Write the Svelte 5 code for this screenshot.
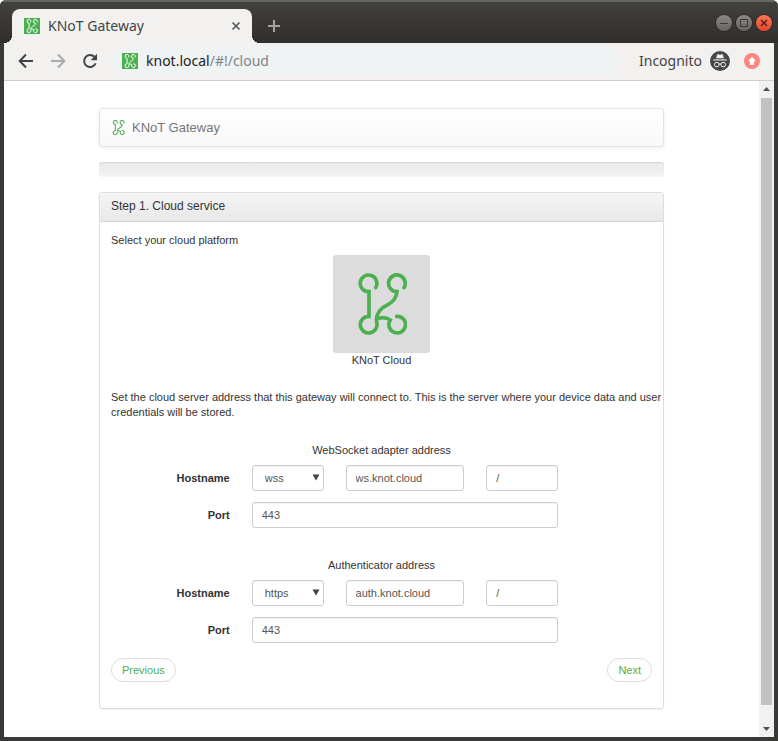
<script>
  const groups = $state([
    { id: 'ws', title: 'WebSocket adapter address', protocols: ['wss', 'ws'], protocol: 'wss', host: 'ws.knot.cloud', path: '/', port: '443' },
    { id: 'auth', title: 'Authenticator address', protocols: ['https', 'http'], protocol: 'https', host: 'auth.knot.cloud', path: '/', port: '443' }
  ]);
</script>

{#snippet knot(cls)}
  <svg class={cls} viewBox="14 17 150 186" aria-hidden="true">
    <path d="M70 61A25 25 0 1 0 50 73V147A25 25 0 1 0 73 165M155 61A25 25 0 1 0 134 73C132 91 124 103 108 111C88 120 73 134 72 158M77 154C90 149 102 150 114 158A25 25 0 1 0 133 147" />
  </svg>
{/snippet}

<div class="window">
  <header class="titlebar">
    <div class="tab">
      <span class="favicon">{@render knot('mark')}</span>
      <span class="tab-title">KNoT Gateway</span>
      <button class="plain close-tab" aria-label="Close tab">
        <svg width="10" height="10" viewBox="0 0 10 10"><path d="M1.5 1.5l7 7M8.5 1.5l-7 7" stroke="#555" stroke-width="1.6" /></svg>
      </button>
    </div>
    <button class="plain new-tab" aria-label="New tab">
      <svg width="12" height="12" viewBox="0 0 12 12"><path d="M6 0v12M0 6h12" stroke="#a4a3a0" stroke-width="2" /></svg>
    </button>
    <div class="controls">
      <button class="plain control" aria-label="Minimize">
        <svg width="16" height="16" viewBox="0 0 16 16"><path d="M4 8.5h8" stroke="#3a3935" /></svg>
      </button>
      <button class="plain control" aria-label="Maximize">
        <svg width="16" height="16" viewBox="0 0 16 16"><path d="M4.5 4.5h7v7h-7z" fill="none" stroke="#3a3935" /></svg>
      </button>
      <button class="plain control quit" aria-label="Close">
        <svg width="16" height="16" viewBox="0 0 16 16"><path d="M5 5l6 6M11 5l-6 6" stroke="#4b2318" stroke-width="1.4" /></svg>
      </button>
    </div>
  </header>

  <nav class="toolbar">
    <button class="plain" aria-label="Back">
      <svg width="16" height="16" viewBox="0 0 16 16"><path d="M15 8H2M8 1.5L1.7 8 8 14.5" fill="none" stroke="#444" stroke-width="2" /></svg>
    </button>
    <button class="plain" aria-label="Forward">
      <svg width="16" height="16" viewBox="0 0 16 16"><path d="M1 8h13M8 1.5L14.3 8 8 14.5" fill="none" stroke="#aaa" stroke-width="2" /></svg>
    </button>
    <button class="plain" aria-label="Reload">
      <svg width="16" height="16" viewBox="0 0 16 16"><path d="M13.6 10.4A6 6 0 1 1 12.4 3.8" fill="none" stroke="#444" stroke-width="2" /><path d="M15 .8v6.4H8.6z" fill="#444" /></svg>
    </button>
    <div class="address">
      <span class="favicon">{@render knot('mark')}</span>
      <span class="url"><b>knot.local</b>/#!/cloud</span>
    </div>
    <span class="incognito">Incognito</span>
    <svg class="spy" width="20" height="20" viewBox="0 0 20 20" aria-hidden="true">
      <circle cx="10" cy="10" r="10" fill="#474747" />
      <path d="M6.2 7.2L7.2 3.6Q7.500 3 8.200 3.200L10 3.700l1.800-.5q.7-.2 1 .4l1 3.600z" fill="#f2f1f0" />
      <path d="M3.300 8.900h13.400" stroke="#f2f1f0" stroke-width="1.100" />
      <circle cx="6.800" cy="13.600" r="2.300" fill="none" stroke="#f2f1f0" />
      <circle cx="13.200" cy="13.600" r="2.300" fill="none" stroke="#f2f1f0" />
      <path d="M9 13.300q1-.7 2 0" fill="none" stroke="#f2f1f0" />
    </svg>
    <button class="plain" aria-label="Update available">
      <svg width="16" height="16" viewBox="0 0 16 16"><circle cx="8" cy="8" r="8" fill="#ff8580" /><path d="M8 3.800l4.200 4.400H10V12H6V8.200H3.800z" fill="#fff" /></svg>
    </button>
  </nav>

  <div class="viewport">
    <main>
      <div class="navbar">{@render knot('brand-mark')}<a href="#!/">KNoT Gateway</a></div>
      <div class="progress"></div>

      <section class="panel">
        <h1>Step 1. Cloud service</h1>
        <div class="body">
          <p>Select your cloud platform</p>
          <figure>
            <div class="thumb">{@render knot('logo')}</div>
            <figcaption>KNoT Cloud</figcaption>
          </figure>
          <p class="help">Set the cloud server address that this gateway will connect to. This is the server where your device data and user credentials will be stored.</p>

          {#each groups as g (g.id)}
            <fieldset>
              <legend>{g.title}</legend>
              <div class="row">
                <label for="{g.id}-host">Hostname</label>
                <div class="select">
                  <select aria-label="{g.title} protocol" bind:value={g.protocol}>
                    {#each g.protocols as p}<option>{p}</option>{/each}
                  </select>
                  <svg width="8" height="7" viewBox="0 0 8 7" aria-hidden="true"><path d="M.5 .5h7L4 6.500z" fill="#444" /></svg>
                </div>
                <input id="{g.id}-host" bind:value={g.host} />
                <input aria-label="{g.title} path" bind:value={g.path} />
              </div>
              <div class="row">
                <label for="{g.id}-port">Port</label>
                <input class="port" id="{g.id}-port" bind:value={g.port} />
              </div>
            </fieldset>
          {/each}

          <div class="pager">
            <button>Previous</button>
            <button>Next</button>
          </div>
        </div>
      </section>
    </main>
    <div class="scrollbar" aria-hidden="true">
      <svg width="7" height="4" viewBox="0 0 7 4"><path d="M0 4L3.500 0 7 4z" fill="#505050" /></svg>
      <div class="scroll-thumb"></div>
      <svg width="7" height="4" viewBox="0 0 7 4"><path d="M0 0h7L3.500 4z" fill="#505050" /></svg>
    </div>
  </div>
</div>

<style>
  :global(body) { margin: 0; background: #fff; }
  * { box-sizing: border-box; }
  .window {
    min-height: 100vh;
    display: flex;
    flex-direction: column;
    padding: 0 4px 4px;
    background: #393a38;
    border-radius: 6px 6px 0 0;
    font: 14px/20px "Noto Sans", "Open Sans", sans-serif;
    color: #444;
    overflow: hidden;
  }
  .plain { border: 0; padding: 0; background: none; display: flex; }
  .titlebar {
    height: 43px;
    display: flex;
    align-items: flex-end;
    margin: 0 -4px;
    padding: 0 6px 0 12px;
    background: linear-gradient(#666 0, #666 2px, #42413e 2px, #302f2d);
  }
  .tab {
    position: relative;
    width: 240px;
    height: 34px;
    display: flex;
    align-items: center;
    padding: 0 11px 0 12px;
    gap: 8px;
    background: #f2f1f0;
    border-radius: 8px 8px 0 0;
  }
  .tab::before, .tab::after {
    content: "";
    position: absolute;
    bottom: 0;
    width: 8px;
    height: 8px;
  }
  .tab::before { right: 100%; background: radial-gradient(circle at 0 0, transparent 8px, #f2f1f0 8px); }
  .tab::after { left: 100%; background: radial-gradient(circle at 100% 0, transparent 8px, #f2f1f0 8px); }
  .favicon { display: flex; width: 16px; height: 16px; background: #4caf50; flex: none; }
  :global(.mark) { width: 16px; height: 14px; margin: 1px 0; fill: none; stroke: #fff; stroke-width: 13; }
  .tab-title { flex: 1; }
  .new-tab { margin: 0 auto 11px 16px; }
  .controls { display: flex; gap: 4px; margin-bottom: 12px; }
  .control { border-radius: 50%; background: linear-gradient(#8a8983, #65645f); box-shadow: 0 0 0 1px #2b2a28; }
  .quit { background: linear-gradient(#f9745a, #e9462a); }
  .toolbar {
    height: 38px;
    display: flex;
    align-items: center;
    gap: 16px;
    padding: 0 14px 1px;
    background: #f2f1f0;
    border-bottom: 1px solid #cecdcc;
  }
  .address {
    flex: 1;
    height: 28px;
    display: flex;
    align-items: center;
    gap: 8px;
    padding-left: 8px;
    border-radius: 14px;
    background: #eff3f4;
    color: #808488;
  }
  .url b { font-weight: 400; color: #222; }
  .incognito { margin-right: -8px; margin-left: 4px; }
  .spy { margin-right: -2px; }

  .viewport {
    flex: 1;
    display: flex;
    background: #fff;
    font: 11px/15px "Liberation Sans", Arial, sans-serif;
    color: #333;
  }
  main { flex: 1; min-width: 0; padding: 27px 95px 28px; }
  .navbar {
    height: 39px;
    display: flex;
    align-items: center;
    gap: 7px;
    padding: 0 12px;
    border: 1px solid #e4e4e4;
    border-radius: 3px;
    background: linear-gradient(#fff, #f8f8f8);
    box-shadow: 0 1px 4px rgba(0, 0, 0, .08);
  }
  .navbar a { font-size: 13px; color: #777; text-decoration: none; }
  :global(.brand-mark) { width: 13px; height: 15px; fill: none; stroke: #4caf50; stroke-width: 13; }
  .progress {
    height: 15px;
    margin: 15px 0;
    border-radius: 3px;
    background: linear-gradient(#e8e8e8, #f5f5f5);
    box-shadow: inset 0 1px 1px rgba(0, 0, 0, .08);
  }
  .panel { border: 1px solid #ddd; border-radius: 3px; box-shadow: 0 1px 2px rgba(0, 0, 0, .05); }
  h1 {
    margin: 0;
    padding: 6px 11px 7px;
    border-bottom: 1px solid #d4d4d4;
    background: linear-gradient(#f5f5f5, #e8e8e8);
    font-size: 12px;
    font-weight: 400;
    line-height: 15px;
  }
  .body { padding: 11px 11px 26px; }
  p { margin: 0; }
  figure { margin: 7px 0 22px; display: flex; flex-direction: column; align-items: center; }
  .thumb { width: 97px; height: 98px; display: grid; place-items: center; background: #dcdcdc; border-radius: 3px; }
  :global(.logo) { width: 50px; height: 62px; fill: none; stroke: #4caf50; stroke-width: 11; stroke-linecap: round; }
  .help { margin: 0 -11px 23px 0; }
  fieldset { margin: 0 -11px 30px; padding: 0; border: 0; min-width: 0; }
  fieldset:last-of-type { margin-bottom: 15px; }
  legend { width: 100%; padding: 0 0 7px; text-align: center; }
  .row {
    display: grid;
    grid-template-columns: 3fr 2fr 3fr 2fr 2fr;
    align-items: center;
  }
  .row + .row { margin-top: 11px; }
  .row > * { margin: 0 11px; min-width: 0; }
  label { font-weight: 700; text-align: right; }
  input, select {
    height: 26px;
    padding: 0 9px;
    border: 1px solid #ccc;
    border-radius: 3px;
    background: #fff;
    box-shadow: inset 0 1px 1px rgba(0, 0, 0, .04);
    color: #555;
    font: inherit;
  }
  .port { grid-column: 2 / 5; }
  .select { position: relative; display: flex; }
  select { width: 100%; padding: 0 12px; appearance: none; }
  .select svg { position: absolute; right: 4px; top: 9px; pointer-events: none; }
  .pager { display: flex; justify-content: space-between; }
  .pager button {
    height: 24px;
    padding: 0 10px;
    border: 1px solid #ddd;
    border-radius: 12px;
    background: #fff;
    color: #4caf50;
    font: inherit;
  }
  .scrollbar {
    width: 15px;
    display: flex;
    flex-direction: column;
    align-items: center;
    padding: 6px 0;
    background: #f1f1f1;
  }
  .scroll-thumb { flex: 1; width: 11px; margin: 7px 0 22px; background: #c1c1c1; }
</style>
